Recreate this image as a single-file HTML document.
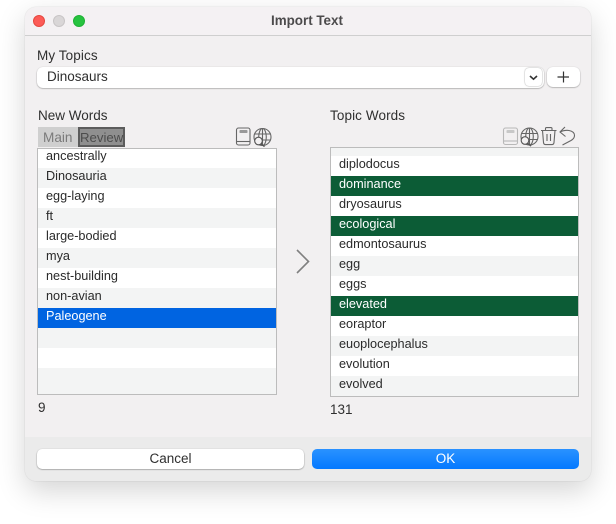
<!DOCTYPE html>
<html>
<head>
<meta charset="utf-8">
<style>
html,body{margin:0;padding:0;width:616px;height:524px;background:#fff;overflow:hidden;}
body{font-family:"Liberation Sans",Arial,sans-serif;color:#2a2a2a;position:relative;}
*{box-sizing:border-box;}
.a{position:absolute;}
.win{position:absolute;left:25px;top:7px;width:566px;height:474px;background:#f2f0f1;border-radius:11px;box-shadow:0 10px 28px rgba(0,0,0,.17),0 0 1px rgba(0,0,0,.22);overflow:hidden;}
.tb{position:absolute;left:0;top:0;width:566px;height:29px;background:#f4f1f3;border-bottom:1px solid #cfcfcf;}
.foot{position:absolute;left:0;top:430px;width:566px;height:44px;background:#ebebeb;}
.dot{position:absolute;width:12px;height:12px;border-radius:50%;top:15px;}
.t{position:absolute;font-size:13.5px;line-height:16px;white-space:nowrap;color:#2f2f2f;}
.list{position:absolute;border:1px solid #bcbcbc;background:#fff;overflow:hidden;}
.r{position:absolute;left:0;right:0;height:20px;font-size:12.7px;line-height:15px;padding-left:8px;padding-top:1px;white-space:nowrap;color:#2a2a2a;background:#fff;}
.s{background:#f3f4f4;}
.g{background:#0c5c36;color:#fff;}
.b{background:#0064e1;color:#fff;}
svg{position:absolute;overflow:visible;}
</style>
</head>
<body>
<div class="win"></div>
<div class="a" style="left:25px;top:7px;width:566px;height:474px;border-radius:11px;overflow:hidden;">
  <div class="tb"></div>
  <div class="foot"></div>
</div>
<div class="dot" style="left:33px;background:#fc5b57;border:.5px solid #e5483f;"></div>
<div class="dot" style="left:53px;background:#d9d6d7;border:.5px solid #c8c5c6;"></div>
<div class="dot" style="left:73px;background:#26c33f;border:.5px solid #1fb135;"></div>
<div class="t" style="left:271px;top:13px;font-size:13.4px;font-weight:bold;color:#4c4b4c;">Import Text</div>

<div class="t" style="left:37px;top:48px;letter-spacing:.1px;">My Topics</div>
<div class="a" style="left:37px;top:67px;width:507px;height:21px;background:#fff;border-radius:6px;box-shadow:0 .5px 1.5px rgba(0,0,0,.4);"></div>
<div class="t" style="left:47px;top:68.5px;">Dinosaurs</div>
<div class="a" style="left:525px;top:68px;width:17px;height:18px;background:#fff;border-radius:4px;box-shadow:0 0 1.5px rgba(0,0,0,.45);"></div>
<svg style="left:525px;top:68px" width="17" height="18"><path d="M5 8 L8.5 11.2 L12 8" fill="none" stroke="#333" stroke-width="1.6"/></svg>
<div class="a" style="left:547px;top:67px;width:33px;height:20px;background:#fff;border-radius:6px;box-shadow:0 .5px 1.5px rgba(0,0,0,.4);"></div>
<svg style="left:547px;top:67px" width="33" height="20"><path d="M16.5 4.5 V15.5 M10.5 10 H22" fill="none" stroke="#333" stroke-width="1.2"/></svg>

<div class="t" style="left:38px;top:108px;">New Words</div>
<div class="a" style="left:38px;top:127px;width:40px;height:20px;background:#cfcfcf;"></div>
<div class="t" style="left:43px;top:129.5px;color:#7a7a7a;font-size:13.6px;">Main</div>
<div class="a" style="left:78px;top:127px;width:47px;height:20px;background:#8f8f8f;border:2px solid #5c5c5c;"></div>
<div class="t" style="left:80px;top:129.5px;color:#4c4c4c;font-size:13.2px;">Review</div>

<svg style="left:235px;top:127px" width="40" height="20" fill="none" stroke="#666" stroke-width="1.1">
  <rect x="1.5" y="1" width="13.5" height="17" rx="2"/>
  <path d="M1.5 14.5 H15"/>
  <rect x="4.5" y="3" width="8" height="3" rx=".8" fill="#999" stroke="none"/>
  <circle cx="27.5" cy="10" r="8.5"/>
  <ellipse cx="27.5" cy="10" rx="3.8" ry="8.5"/>
  <path d="M19.5 7 H36 M19.5 13 H36 M27.5 1.5 V18.5"/>
  <circle cx="23.5" cy="14" r="3.8" fill="#f2f0f1" stroke="#555"/>
  <path d="M26.2 16.8 L29.5 19.6" stroke="#555" stroke-width="1.4"/>
</svg>

<div class="list" style="left:37px;top:148px;width:240px;height:247px;">
  <div class="r" style="top:-1px;">ancestrally</div>
  <div class="r s" style="top:19px;">Dinosauria</div>
  <div class="r" style="top:39px;">egg-laying</div>
  <div class="r s" style="top:59px;">ft</div>
  <div class="r" style="top:79px;">large-bodied</div>
  <div class="r s" style="top:99px;">mya</div>
  <div class="r" style="top:119px;">nest-building</div>
  <div class="r s" style="top:139px;">non-avian</div>
  <div class="r b" style="top:159px;">Paleogene</div>
  <div class="r s" style="top:179px;"></div>
  <div class="r" style="top:199px;"></div>
  <div class="r s" style="top:219px;height:28px;"></div>
</div>
<div class="t" style="left:38px;top:400px;">9</div>

<svg style="left:290px;top:246px" width="24" height="30"><path d="M7 4 L18.5 15.5 L7 27" fill="none" stroke="#808080" stroke-width="1.6"/></svg>

<div class="t" style="left:330px;top:108px;letter-spacing:.1px;">Topic Words</div>
<svg style="left:502px;top:126px" width="78" height="22" fill="none" stroke="#666" stroke-width="1.1">
  <g stroke="#b8b8b8"><rect x="1.5" y="2" width="14" height="16.5" rx="2"/>
  <path d="M1.5 15 H15.5"/>
  <rect x="4.5" y="4" width="8" height="3" rx=".8" fill="#c8c8c8" stroke="none"/></g>
  <circle cx="27.5" cy="10.5" r="8.5"/>
  <ellipse cx="27.5" cy="10.5" rx="3.8" ry="8.5"/>
  <path d="M19.5 7.5 H36 M19.5 13.5 H36 M27.5 2 V19"/>
  <circle cx="23" cy="14.5" r="3.8" fill="#f2f0f1" stroke="#555"/>
  <path d="M25.7 17.3 L29 20.1" stroke="#555" stroke-width="1.4"/>
  <path d="M39 4.5 H54.5 M43.5 4.5 V2.6 Q43.5 1.6 44.5 1.6 H49 Q50 1.6 50 2.6 V4.5 M40.5 4.5 L41.5 16.5 Q41.8 18.6 43.5 18.6 H50 Q51.7 18.6 52 16.5 L53 4.5 M45 8 V15 M48.5 8 V15"/>
  <path d="M63 1 L58 6 L63.5 10.5 M58 6 Q63 3.8 67 4.5 Q72.5 5.5 72.5 9.5 Q72.5 12.5 69 14.5 L60.5 19"/>
</svg>

<div class="list" style="left:330px;top:147px;width:249px;height:250px;">
  <div class="r s" style="top:0;height:8px;"></div>
  <div class="r" style="top:8px;">diplodocus</div>
  <div class="r g" style="top:28px;">dominance</div>
  <div class="r" style="top:48px;">dryosaurus</div>
  <div class="r g" style="top:68px;">ecological</div>
  <div class="r" style="top:88px;">edmontosaurus</div>
  <div class="r s" style="top:108px;">egg</div>
  <div class="r" style="top:128px;">eggs</div>
  <div class="r g" style="top:148px;">elevated</div>
  <div class="r" style="top:168px;">eoraptor</div>
  <div class="r s" style="top:188px;">euoplocephalus</div>
  <div class="r" style="top:208px;">evolution</div>
  <div class="r s" style="top:228px;height:21px;">evolved</div>
</div>
<div class="t" style="left:330px;top:402px;">131</div>

<div class="a" style="left:37px;top:449px;width:267px;height:20px;background:#fff;border-radius:5px;box-shadow:0 .5px 1.5px rgba(0,0,0,.45);"></div>
<div class="t" style="left:37px;top:451px;width:267px;text-align:center;">Cancel</div>
<div class="a" style="left:312px;top:449px;width:267px;height:20px;background:linear-gradient(#2a92ff,#0479ff);border-radius:5px;"></div>
<div class="t" style="left:312px;top:451px;width:267px;text-align:center;color:#fff;">OK</div>
</body>
</html>
